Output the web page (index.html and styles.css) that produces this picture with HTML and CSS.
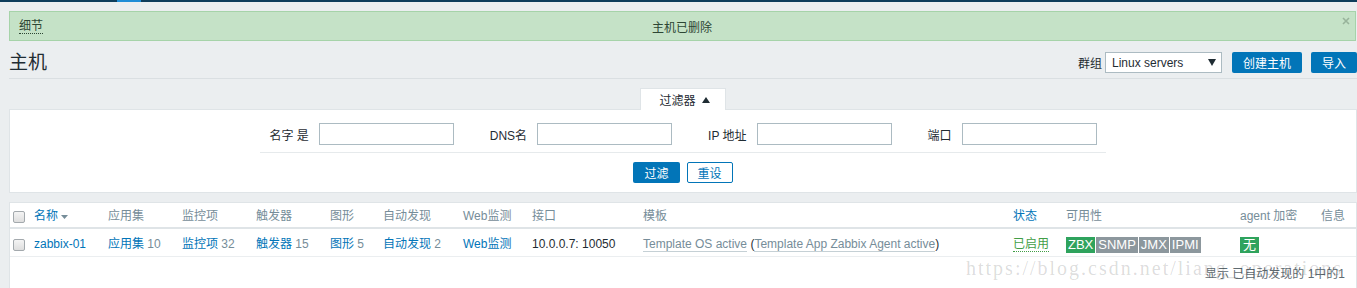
FILE: index.html
```html
<!DOCTYPE html>
<html lang="zh-CN">
<head>
    <meta charset="UTF-8">
    <meta name="viewport" content="width=device-width, initial-scale=1.0">
    <title>主机</title>
    <link rel="stylesheet" href="styles.css">
</head>
<body>
    <div class="topnav"><span class="topnav-active"></span></div>
    <div class="page">
        <div class="msg">
            <span class="msg-details">细节</span>
            <span class="msg-text">主机已删除</span>
            <svg class="msg-close" width="8" height="8" viewBox="0 0 8 8"><path d="M1 1L7 7M7 1L1 7" stroke="#98b39b" stroke-width="1.6"/></svg>
        </div>

        <div class="header">
            <h1>主机</h1>
            <div class="header-controls">
                <label>群组</label>
                <div class="select">Linux servers<svg class="select-arrow" width="8" height="7" viewBox="0 0 8 7"><path d="M0 0H8L4 7Z" fill="#1f2c33"/></svg></div>
                <button class="btn">创建主机</button>
                <button class="btn btn-import">导入</button>
            </div>
        </div>

        <div class="filter">
            <div class="filter-tab">过滤器 <svg width="8" height="6" viewBox="0 0 8 6"><path d="M0 6H8L4 0Z" fill="#1f2c33"/></svg></div>
            <div class="filter-panel">
                <div class="filter-fields">
                    <div class="field"><label>名字 是</label><input type="text"></div>
                    <div class="field"><label>DNS名</label><input type="text"></div>
                    <div class="field"><label>IP 地址</label><input type="text"></div>
                    <div class="field"><label>端口</label><input type="text"></div>
                </div>
                <div class="filter-buttons">
                    <button class="btn">过滤</button>
                    <button class="btn btn-alt">重设</button>
                </div>
            </div>
        </div>

        <div class="list">
            <table>
                <colgroup>
                    <col style="width: 24px">
                    <col style="width: 74px">
                    <col style="width: 74px">
                    <col style="width: 74px">
                    <col style="width: 74px">
                    <col style="width: 53px">
                    <col style="width: 80px">
                    <col style="width: 69px">
                    <col style="width: 111px">
                    <col style="width: 370px">
                    <col style="width: 53px">
                    <col style="width: 174px">
                    <col style="width: 81px">
                    <col>
                </colgroup>
                <thead>
                    <tr>
                        <th class="cell-check"><span class="checkbox"></span></th>
                        <th><a href="#">名称</a> <svg width="7" height="4" viewBox="0 0 7 4"><path d="M0 0H7L3.5 4Z" fill="#768d99"/></svg></th>
                        <th>应用集</th>
                        <th>监控项</th>
                        <th>触发器</th>
                        <th>图形</th>
                        <th>自动发现</th>
                        <th>Web监测</th>
                        <th>接口</th>
                        <th>模板</th>
                        <th><a href="#">状态</a></th>
                        <th>可用性</th>
                        <th>agent 加密</th>
                        <th>信息</th>
                    </tr>
                </thead>
                <tbody>
                    <tr>
                        <td class="cell-check"><span class="checkbox"></span></td>
                        <td><a href="#">zabbix-01</a></td>
                        <td><a href="#">应用集</a> <span class="count">10</span></td>
                        <td><a href="#">监控项</a> <span class="count">32</span></td>
                        <td><a href="#">触发器</a> <span class="count">15</span></td>
                        <td><a href="#">图形</a> <span class="count">5</span></td>
                        <td><a href="#">自动发现</a> <span class="count">2</span></td>
                        <td><a href="#">Web监测</a></td>
                        <td>10.0.0.7: 10050</td>
                        <td><a href="#" class="link-grey">Template OS active</a> (<a href="#" class="link-grey">Template App Zabbix Agent active</a>)</td>
                        <td><a href="#" class="status-on">已启用</a></td>
                        <td>
                            <span class="status-group">
                                <span class="badge badge-green">ZBX</span><span class="badge">SNMP</span><span class="badge">JMX</span><span class="badge">IPMI</span>
                            </span>
                        </td>
                        <td><span class="badge badge-green badge-single">无</span></td>
                        <td></td>
                    </tr>
                </tbody>
            </table>
            <div class="list-stats">显示 已自动发现的 1中的1</div>
        </div>
    </div>
    <div class="watermark">https://blog.csdn.net/liang_operations</div>
</body>
</html>
```

FILE: styles.css
```css
body {
    margin: 0;
    background-color: #ebeef0;
    font-family: "Liberation Sans", "Noto Sans CJK SC", sans-serif;
    font-size: 12px;
    color: #1f2c33;
    overflow: hidden;
}
a {
    color: #0275b8;
    text-decoration: none;
}
.topnav {
    height: 2px;
    background-color: #0e3d5b;
}
.topnav-active {
    display: block;
    width: 24px;
    height: 2px;
    margin-left: 117px;
    background-color: #1f8dd6;
}
.page {
    padding: 9px 0 0 9px;
}

/* message */
.msg {
    position: relative;
    display: flex;
    align-items: center;
    height: 28px;
    margin-right: 1px;
    padding: 0 9px;
    border: 1px solid #a6d3a9;
    background-color: #c5e2c7;
    color: #2d4634;
}
.msg-details {
    line-height: 14px;
    border-bottom: 1px dotted #2d4634;
}
.msg-text {
    flex: 1;
    text-align: center;
    padding-right: 25px;
}
.msg-close {
    position: absolute;
    top: 5px;
    right: 5px;
}

/* header */
.header {
    display: flex;
    justify-content: space-between;
    align-items: center;
    height: 31px;
    padding-top: 6px;
    border-bottom: 1px solid #dadfe2;
}
h1 {
    margin: 0;
    font-size: 19px;
    font-weight: normal;
    line-height: 22px;
}
.header-controls {
    display: flex;
    align-items: center;
}
.select {
    display: flex;
    align-items: center;
    justify-content: space-between;
    box-sizing: border-box;
    width: 117px;
    height: 21px;
    margin-left: 3px;
    padding: 0 5px 0 6px;
    border: 1px solid #acbbc2;
    background-color: #fff;
}
.btn {
    height: 21px;
    padding: 0 11px;
    border: none;
    border-radius: 2px;
    background-color: #0275b8;
    color: #fff;
    font-family: inherit;
    font-size: 12px;
    cursor: pointer;
}
.header-controls .btn {
    margin-left: 10px;
}
.header-controls .btn-import {
    margin-left: 9px;
}

/* filter */
.filter {
    margin-top: 9px;
}
.filter-tab {
    position: relative;
    z-index: 1;
    display: flex;
    align-items: center;
    gap: 6px;
    width: fit-content;
    height: 21px;
    margin: 0 auto -1px;
    padding: 0 15px 0 18px;
    border: 1px solid #dfe4e7;
    border-bottom: none;
    background-color: #fff;
}
.filter-panel {
    padding: 13px 0 9px;
    border: 1px solid #dfe4e7;
    background-color: #fff;
}
.filter-fields {
    display: flex;
    gap: 36px;
    width: fit-content;
    margin: 0 auto;
    padding: 0 9px 7px;
    border-bottom: 1px solid #e6eaec;
}
.field {
    display: flex;
    align-items: center;
    gap: 10px;
}
.field input {
    box-sizing: border-box;
    width: 135px;
    height: 22px;
    border: 1px solid #acbbc2;
    background-color: #fff;
}
.filter-buttons {
    display: flex;
    justify-content: center;
    gap: 7px;
    margin-top: 9px;
}
.btn-alt {
    border: 1px solid #0275b8;
    background-color: #fff;
    color: #0275b8;
    padding: 0 10px;
}

/* list */
.list {
    position: relative;
    margin-top: 9px;
    border: 1px solid #dfe4e7;
    background-color: #fff;
}
table {
    width: 100%;
    table-layout: fixed;
    border-collapse: collapse;
}
th {
    padding: 6px 0 4px;
    line-height: 14px;
    text-align: left;
    font-weight: normal;
    color: #768d99;
    white-space: nowrap;
    border-bottom: 2px solid #dfe4e7;
}
th svg {
    vertical-align: middle;
}
td {
    padding: 7px 0 3px;
    line-height: 16px;
    white-space: nowrap;
    border-bottom: 1px solid #ebeef0;
}
.cell-check {
    padding-left: 3px;
}
.checkbox {
    display: inline-block;
    box-sizing: border-box;
    width: 12px;
    height: 12px;
    vertical-align: middle;
    border: 1px solid #a3a9ad;
    border-radius: 2px;
    background: linear-gradient(#f4f4f4, #dedede);
}
.count {
    color: #768d99;
}
.link-grey {
    color: #768d99;
    border-bottom: 1px solid #c5d0d5;
}
.status-on {
    color: #429e47;
    border-bottom: 1px dotted #429e47;
}
.status-group {
    display: inline-flex;
    gap: 1px;
    vertical-align: middle;
}
.badge {
    display: inline-block;
    padding: 0 2px;
    font-size: 13px;
    line-height: 16px;
    color: #fff;
    background-color: #8c979d;
}
.badge-green {
    background-color: #2fa35d;
}
.badge-single {
    padding: 0 3px;
    vertical-align: middle;
}
.list-stats {
    padding: 7px 11px 8px;
    text-align: right;
    color: #5f6b72;
}
.watermark {
    position: absolute;
    top: 257px;
    left: 966px;
    font-family: "Liberation Serif", serif;
    font-size: 20px;
    letter-spacing: 2px;
    color: rgba(0, 0, 0, 0.15);
    white-space: nowrap;
    pointer-events: none;
}
```
